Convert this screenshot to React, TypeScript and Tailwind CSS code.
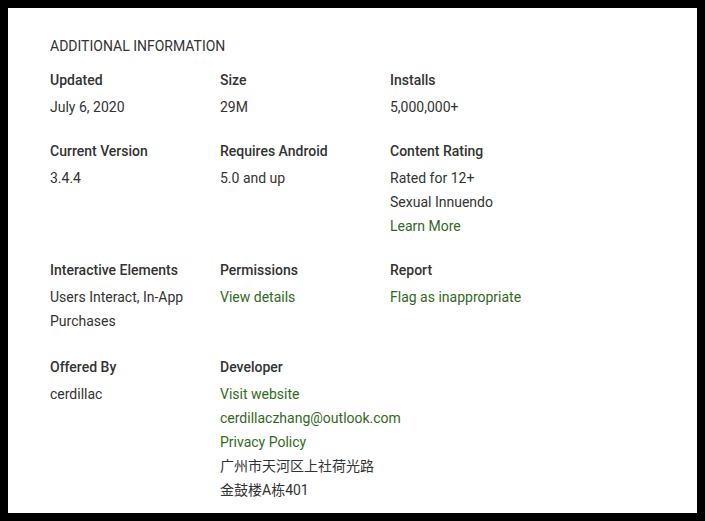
import React from "react";

type Item = {
  label: string;
  values: { text: string; link?: boolean }[];
};

const rows: Item[][] = [
  [
    { label: "Updated", values: [{ text: "July 6, 2020" }] },
    { label: "Size", values: [{ text: "29M" }] },
    { label: "Installs", values: [{ text: "5,000,000+" }] },
  ],
  [
    { label: "Current Version", values: [{ text: "3.4.4" }] },
    { label: "Requires Android", values: [{ text: "5.0 and up" }] },
    {
      label: "Content Rating",
      values: [
        { text: "Rated for 12+" },
        { text: "Sexual Innuendo" },
        { text: "Learn More", link: true },
      ],
    },
  ],
  [
    { label: "Interactive Elements", values: [{ text: "Users Interact, In-App Purchases" }] },
    { label: "Permissions", values: [{ text: "View details", link: true }] },
    { label: "Report", values: [{ text: "Flag as inappropriate", link: true }] },
  ],
  [
    { label: "Offered By", values: [{ text: "cerdillac" }] },
    {
      label: "Developer",
      values: [
        { text: "Visit website", link: true },
        { text: "cerdillaczhang@outlook.com", link: true },
        { text: "Privacy Policy", link: true },
        { text: "广州市天河区上社荷光路金鼓楼A栋401" },
      ],
    },
  ],
];

function InfoCell({ item }: { item: Item }) {
  return (
    <div className="pr-[10px]">
      <div className="font-medium leading-6 text-[#333333]">{item.label}</div>
      <div className="mt-[3px]">
        {item.values.map((v, i) =>
          v.link ? (
            <div key={i} className="leading-6">
              <a href="#" className="text-[#33691e]">
                {v.text}
              </a>
            </div>
          ) : (
            <div key={i} className="leading-6 text-[#333333]">
              {v.text}
            </div>
          )
        )}
      </div>
    </div>
  );
}

export default function App() {
  return (
    <div className="w-[705px] h-[521px] bg-black p-2">
      <div
        className="h-full bg-white pl-[42px] pt-[26px] text-[14px]"
        style={{ fontFamily: 'Roboto, "Noto Sans CJK SC", sans-serif' }}
      >
        <h2 className="uppercase leading-6 text-[#333333] mb-[10px]">Additional Information</h2>
        <div className="flex flex-col gap-5">
          {rows.map((row, r) => (
            <div
              key={r}
              className={`grid grid-cols-[170px_170px_170px] ${r === 3 ? "mt-[2px]" : ""}`}
            >
              {row.map((item) => (
                <InfoCell key={item.label} item={item} />
              ))}
            </div>
          ))}
        </div>
      </div>
    </div>
  );
}
